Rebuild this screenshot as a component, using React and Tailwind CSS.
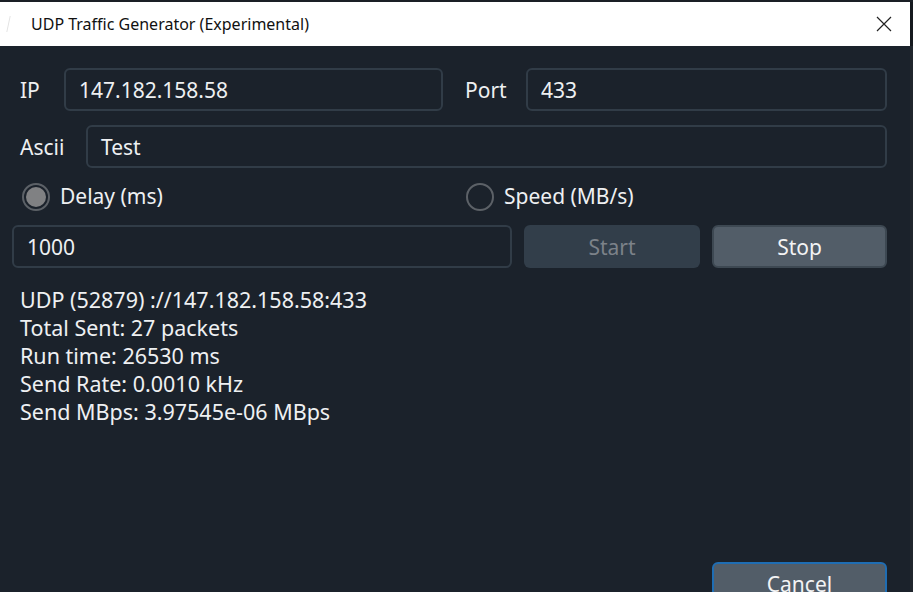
import React from 'react';

const font = { fontFamily: '"Noto Sans", "Open Sans", sans-serif' };

const Field = ({ value, className = '' }) => (
  <div className={`h-[43px] flex items-center rounded-[6px] border-2 border-[#313c47] bg-[#1b222b] px-[13px] pt-[2px] text-[21px] text-[#eef0f2] ${className}`}>
    {value}
  </div>
);

const Radio = ({ checked, label }) => (
  <div className="flex items-center gap-[10px]">
    <div className="w-[28px] h-[28px] rounded-full border-2 border-[#5c6167] flex items-center justify-center">
      {checked && <div className="w-[20px] h-[20px] rounded-full bg-[#808183]" />}
    </div>
    <span className="text-[21px] text-[#eef0f2]">{label}</span>
  </div>
);

const stats = [
  'UDP (52879) ://147.182.158.58:433',
  'Total Sent: 27 packets',
  'Run time: 26530 ms',
  'Send Rate: 0.0010 kHz',
  'Send MBps: 3.97545e-06 MBps',
];

export default function App() {
  return (
    <div className="w-[913px] h-[592px] overflow-hidden bg-[#161b21] flex flex-col" style={font}>
      <div className="h-[2px] bg-[#1a1f25]" />
      <div className="flex flex-1 min-h-0">
        <div className="w-[910px] flex flex-col">
          {/* title bar */}
          <div className="h-[44px] bg-white flex items-center pl-[8px] pr-[18px]">
            <div className="w-[8px] h-[16px] border-l border-[#e4e4e4] -skew-x-12 mr-[15px]" />
            <span className="text-[16px] text-[#111]">UDP Traffic Generator (Experimental)</span>
            <svg className="ml-auto" width="16" height="16" viewBox="0 0 16 16">
              <path d="M1 1 L15 15 M15 1 L1 15" stroke="#222" strokeWidth="1.2" fill="none" />
            </svg>
          </div>

          {/* body */}
          <div className="flex-1 bg-[#1b222b] pt-[22px] pl-[12px] pr-[23px] flex flex-col">
            <div className="flex items-center pl-[8px]">
              <span className="w-[44px] pt-[2px] text-[21px] text-[#eef0f2]">IP</span>
              <Field value="147.182.158.58" className="w-[379px]" />
              <span className="w-[61px] ml-[22px] pt-[2px] text-[21px] text-[#eef0f2]">Port</span>
              <Field value="433" className="flex-1" />
            </div>

            <div className="flex items-center pl-[8px] mt-[14px]">
              <span className="w-[66px] pt-[2px] text-[21px] text-[#eef0f2]">Ascii</span>
              <Field value="Test" className="flex-1 h-[42px]" />
            </div>

            <div className="flex items-center mt-[15px] pl-[10px] h-[28px]">
              <div className="w-[444px]">
                <Radio checked label="Delay (ms)" />
              </div>
              <Radio label="Speed (MB/s)" />
            </div>

            <div className="flex items-center mt-[14px] gap-[12px]">
              <Field value="1000" className="w-[500px]" />
              <div className="w-[176px] h-[43px] pt-[2px] rounded-[6px] bg-[#323e4a] flex items-center justify-center text-[21px] text-[#7c8289]">
                Start
              </div>
              <div className="flex-1 h-[43px] pt-[2px] rounded-[6px] border-2 border-[#3d4852] bg-[#525d68] flex items-center justify-center text-[21px] text-[#f2f3f4]">
                Stop
              </div>
            </div>

            <div className="pl-[8px] mt-[18px] flex flex-col">
              {stats.map((s) => (
                <div key={s} className="h-[28px] leading-[28px] text-[21.5px] text-[#eef0f2]">{s}</div>
              ))}
            </div>

            <div className="flex-1" />
            <div className="flex justify-end">
              <div className="w-[175px] h-[43px] -mb-[13px] pt-[2px] rounded-[6px] border-2 border-[#1f6db3] bg-[#525d68] flex items-center justify-center text-[21px] text-[#f2f3f4]">
                Cancel
              </div>
            </div>
          </div>
        </div>
        <div className="flex-1 bg-[#20262d] flex flex-col">
          <div className="h-[44px] bg-[#15191e]" />
        </div>
      </div>
    </div>
  );
}
